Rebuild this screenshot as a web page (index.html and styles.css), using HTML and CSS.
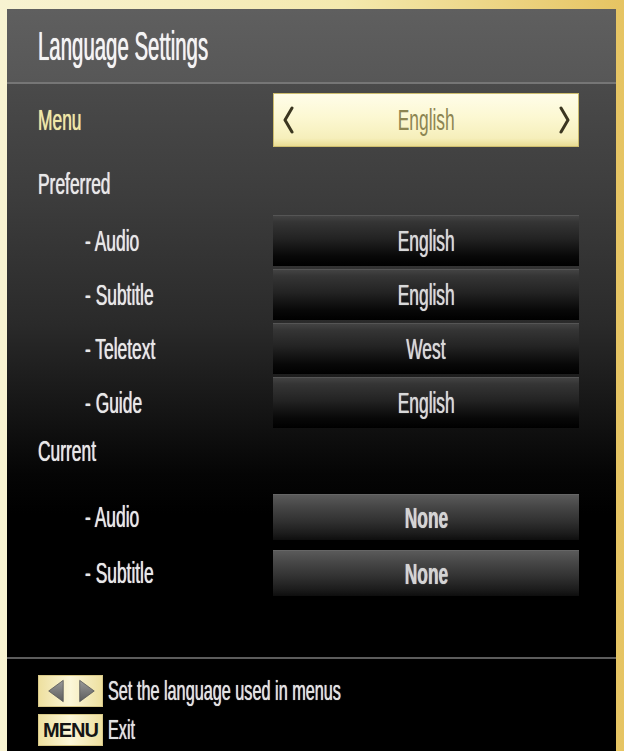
FILE: index.html
```html
<!DOCTYPE html>
<html lang="en">
<head>
<meta charset="utf-8">
<title>Language Settings</title>
<link rel="stylesheet" href="styles.css">
</head>
<body>
<div class="screen">
  <div class="panel">
    <header class="title-bar">
      <h1 class="title"><span class="sq">Language Settings</span></h1>
    </header>
    <main class="content">
      <div class="row row-menu">
        <span class="label label-active"><span class="sq">Menu</span></span>
        <div class="value value-active">
          <svg class="chev" width="12" height="28" viewBox="0 0 12 28"><polyline points="10,2 3,14 10,26" fill="none" stroke="#3b3620" stroke-width="3" stroke-linecap="round" stroke-linejoin="round"/></svg>
          <span class="sq">English</span>
          <svg class="chev" width="12" height="28" viewBox="0 0 12 28"><polyline points="2,2 9,14 2,26" fill="none" stroke="#3b3620" stroke-width="3" stroke-linecap="round" stroke-linejoin="round"/></svg>
        </div>
      </div>

      <div class="section section-pref"><span class="sq">Preferred</span></div>
      <div class="list list-pref">
        <div class="row">
          <span class="label label-sub"><span class="sq">- Audio</span></span>
          <div class="value"><span class="sq">English</span></div>
        </div>
        <div class="row">
          <span class="label label-sub"><span class="sq">- Subtitle</span></span>
          <div class="value"><span class="sq">English</span></div>
        </div>
        <div class="row">
          <span class="label label-sub"><span class="sq">- Teletext</span></span>
          <div class="value"><span class="sq">West</span></div>
        </div>
        <div class="row">
          <span class="label label-sub"><span class="sq">- Guide</span></span>
          <div class="value"><span class="sq">English</span></div>
        </div>
      </div>

      <div class="section section-cur"><span class="sq">Current</span></div>
      <div class="list list-cur">
        <div class="row">
          <span class="label label-sub"><span class="sq">- Audio</span></span>
          <div class="value value-cur"><span class="sq">None</span></div>
        </div>
        <div class="row">
          <span class="label label-sub"><span class="sq">- Subtitle</span></span>
          <div class="value value-cur"><span class="sq">None</span></div>
        </div>
      </div>
    </main>
    <footer class="footer">
      <div class="hint">
        <span class="key key-arrows">
          <svg width="65" height="32" viewBox="0 0 65 32">
            <defs>
              <linearGradient id="tri" x1="0" y1="0" x2="0" y2="1">
                <stop offset="0" stop-color="#9a9a9a"/>
                <stop offset="1" stop-color="#5c5c5c"/>
              </linearGradient>
            </defs>
            <polygon points="10,16 25,5 25,27" fill="url(#tri)" stroke="#555" stroke-width="0.8"/>
            <polygon points="57,16 42,5 42,27" fill="url(#tri)" stroke="#555" stroke-width="0.8"/>
          </svg>
        </span>
        <span class="hint-text"><span class="sq">Set the language used in menus</span></span>
      </div>
      <div class="hint">
        <span class="key key-menu">MENU</span>
        <span class="hint-text"><span class="sq">Exit</span></span>
      </div>
    </footer>
  </div>
</div>
</body>
</html>
```
FILE: styles.css
```css
* { box-sizing: border-box; }

html, body {
  margin: 0;
  padding: 0;
}

body {
  background: #f5eec6;
  font-family: "Liberation Sans", Arial, sans-serif;
}

.screen {
  width: 624px;
  height: 751px;
  padding: 9px 8px 0 7px;
  overflow: hidden;
  background: linear-gradient(to right, #f8f3d2 0%, #f4e9ae 55%, #e6c462 100%);
}

.panel {
  height: 742px;
  display: flex;
  flex-direction: column;
  background: #000;
}

.sq {
  display: inline-block;
  white-space: nowrap;
  transform: scaleX(0.58);
  transform-origin: left center;
  text-shadow: 0 0 1px currentColor;
}

/* header */
.title-bar {
  flex: none;
  height: 75px;
  display: flex;
  align-items: center;
  padding-left: 31px;
  background: linear-gradient(#5f5f5f, #575757);
  border-bottom: 2px solid #767676;
}

.title {
  margin: 0;
  font-size: 40px;
  font-weight: normal;
  line-height: 1;
  color: #f4f4f4;
}

.title .sq {
  transform: scaleX(0.51);
}

/* body */
.content {
  flex: 1;
  padding-top: 9px;
  background: linear-gradient(#4a4a4a 0, #3d3d3d 110px, #2a2a2a 240px, #141414 330px, #050505 390px, #000 430px);
}

.row {
  display: grid;
  grid-template-columns: 266px 306px;
  align-items: center;
}

.label {
  padding-left: 31px;
  font-size: 30px;
  line-height: 1;
  color: #e8e8e8;
}

.label-active {
  color: #f0e7a6;
}

.label-sub {
  padding-left: 78px;
}

.value {
  height: 51px;
  display: flex;
  align-items: center;
  justify-content: center;
  font-size: 30px;
  line-height: 1;
  color: #d9d9d9;
  border-top: 1px solid #555;
  background: linear-gradient(#434343 0, #353535 12%, #232323 45%, #080808 80%, #000 100%);
}

.value .sq {
  transform-origin: center center;
}

.value-active {
  height: 54px;
  justify-content: space-between;
  padding: 0 7px 0 8px;
  border: 1px solid #cdbd6e;
  color: #8c8552;
  background: linear-gradient(#fffde9 0%, #fcf8d2 45%, #f6efbb 85%, #e9dc93 100%);
}

.value-active .sq {
  text-shadow: none;
}

.chev {
  display: block;
}

.section {
  font-size: 30px;
  line-height: 1;
  color: #e8e8e8;
  padding-left: 31px;
  display: flex;
  align-items: center;
}

.section-pref {
  height: 68px;
  padding-top: 6px;
}

.section-cur {
  height: 66px;
  padding-bottom: 20px;
}

.list {
  display: flex;
  flex-direction: column;
}

.list-pref {
  gap: 3px;
}

.list-cur {
  gap: 10px;
}

.value-cur {
  height: 46px;
  border-top: 1px solid #666;
  color: #d4d4d4;
  font-weight: bold;
  background: linear-gradient(#5a5a5a 0, #474747 25%, #333 55%, #1c1c1c 85%, #0e0e0e 100%);
}

/* footer */
.footer {
  flex: none;
  height: 94px;
  border-top: 2px solid #5c5c5c;
  padding: 16px 0 0 31px;
  display: flex;
  flex-direction: column;
  gap: 7px;
  background: #000;
}

.hint {
  display: flex;
  align-items: center;
  gap: 5px;
  height: 32px;
}

.key {
  flex: none;
  width: 65px;
  height: 32px;
  display: flex;
  align-items: center;
  justify-content: center;
  background: linear-gradient(to right, #eee0a0, #fbf6d8 50%, #eee0a0);
  border: 1px solid #d8c888;
}

.key-arrows svg {
  display: block;
}

.key-menu {
  font-size: 20px;
  font-weight: bold;
  letter-spacing: -1px;
  color: #141414;
}

.hint-text {
  font-size: 28px;
  line-height: 1;
  color: #e2e2e2;
}
```
